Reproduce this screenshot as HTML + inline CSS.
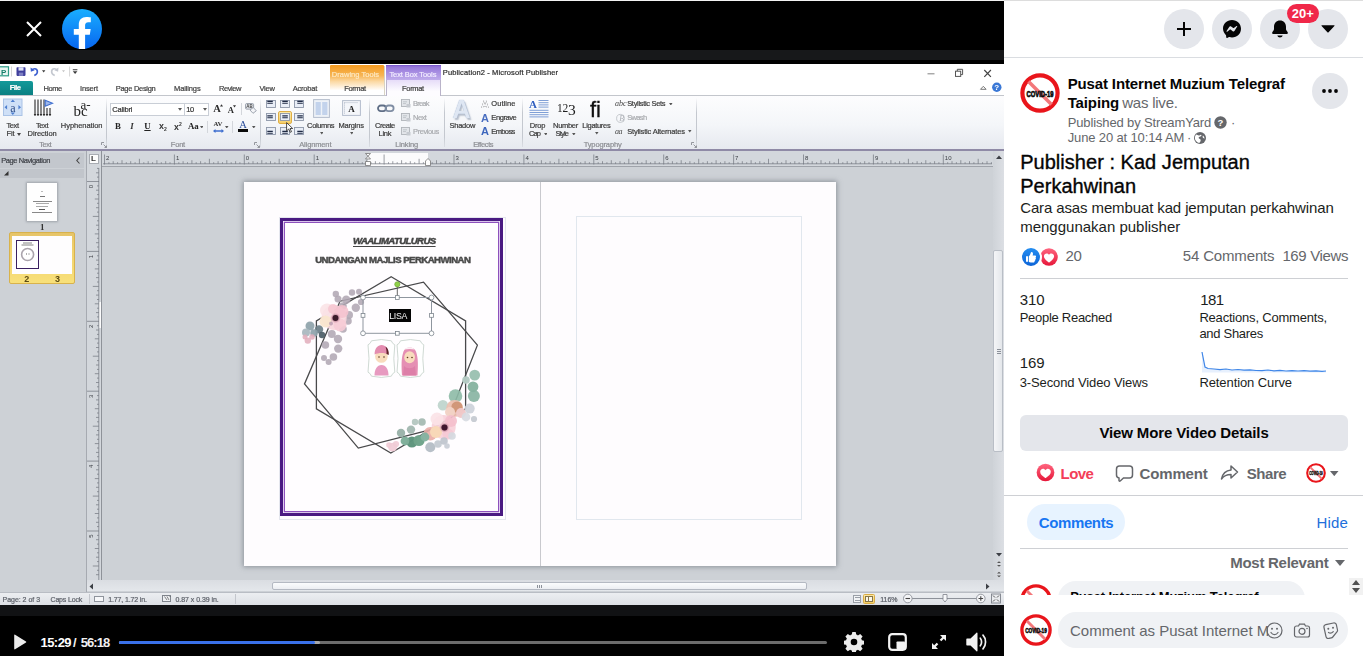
<!DOCTYPE html>
<html lang="en">
<head>
<meta charset="utf-8">
<title>Publisher : Kad Jemputan Perkahwinan</title>
<style>
*{box-sizing:border-box;margin:0;padding:0}
html,body{width:1363px;height:656px;overflow:hidden;background:#fff;font-family:"Liberation Sans",sans-serif;color:#050505}
.abs,.abs *{position:absolute}
#left{position:absolute;left:0;top:0;width:1004px;height:656px;background:#000;overflow:hidden}
#right{position:absolute;left:1004px;top:0;width:359px;height:656px;background:#fff;overflow:hidden}
.t{position:absolute;white-space:nowrap;line-height:1}
/* ---------- video frame ---------- */
#vid{position:absolute;left:0;top:0;width:1004px;height:605px;background:#cdd1d6;overflow:hidden;clip-path:inset(64px 0 0 0);font-size:8.5px;color:#333}
#vid .t{color:#3a3a3a;filter:blur(.35px)}
/* ---------- right panel ---------- */
.circ{position:absolute;width:40px;height:40px;border-radius:50%;background:#e4e6eb}
.g{color:#65676b}
</style>
</head>
<body>
<div id="left">
  <!-- top bar -->
  <div style="position:absolute;left:0;top:0;width:1004px;height:1px;background:#f2f2f2"></div>
  <div style="position:absolute;left:0;top:50px;width:1004px;height:10px;background:#17181a"></div>
  <svg style="position:absolute;left:26px;top:21px" width="16" height="16" viewBox="0 0 16 16"><path d="M1 1L15 15M15 1L1 15" stroke="#fff" stroke-width="2" fill="none"/></svg>
  <svg style="position:absolute;left:62px;top:9px" width="40" height="40" viewBox="0 0 40 40">
    <defs><linearGradient id="fbg" x1="0" y1="0" x2="0" y2="1"><stop offset="0" stop-color="#19aeff"/><stop offset="1" stop-color="#0866f0"/></linearGradient></defs>
    <circle cx="20" cy="20" r="20" fill="url(#fbg)"/>
    <path d="M27.8 25.8l.9-5.8h-5.600v-3.700c0-1.600.8-3.100 3.200-3.100h2.500V8.300s-2.300-.4-4.500-.4c-4.500 0-7.500 2.800-7.500 7.700V20h-5v5.800h5V40h6.300V25.800z" fill="#fff"/>
  </svg>

  <div id="vid">
  <!--VID--><div style="position:absolute;left:0.0px;top:64.0px;width:1004.0px;height:31.0px;background:#fff;"></div>
<div style="position:absolute;left:0.0px;top:95.0px;width:1004.0px;height:54.0px;background:linear-gradient(#fdfdfe 0%,#f4f6f9 55%,#e6e9ef 100%);"></div>
<div style="position:absolute;left:0.0px;top:149.0px;width:1004.0px;height:1.5px;background:#8f8aa6;"></div>
<div style="position:absolute;left:329.5px;top:65.0px;width:54.5px;height:30.0px;background:linear-gradient(#f39a1f 0%,#f7b555 35%,#fbd9a4 55%,#fff 85%);border-radius:1px"></div>
<div style="position:absolute;left:386.0px;top:65.0px;width:54.5px;height:15.0px;background:linear-gradient(#7450c8 0,#9677da 12%,#a88fe2 50%,#bfaceb 100%);"></div>
<div style="position:absolute;left:386.0px;top:80.0px;width:54.5px;height:16.0px;background:linear-gradient(#e6dcf8,#fdfcff 70%);border-left:1px solid #b9b3c9;border-right:1px solid #b9b3c9"></div>
<div style="position:absolute;left:0.0px;top:95.0px;width:386.0px;height:1.0px;background:#c3c6cc;"></div>
<div style="position:absolute;left:440.5px;top:95.0px;width:563.5px;height:1.0px;background:#c3c6cc;"></div>
<div style="position:absolute;left:384.0px;top:66.0px;width:1.0px;height:29.0px;background:#d8d2c4;"></div>
<div class="t" style="left:331.8px;top:71.0px;font-size:7.50px;color:#fde9c4;letter-spacing:0.03px;-webkit-text-stroke:.2px #fde9c4;">Drawing Tools</div>
<div class="t" style="left:389.4px;top:70.8px;font-size:7.50px;color:#f2ecff;letter-spacing:-0.09px;-webkit-text-stroke:.2px #f2ecff;">Text Box Tools</div>
<div class="t" style="left:442.8px;top:69.3px;font-size:7.50px;color:#2c2c2c;letter-spacing:0.12px;-webkit-text-stroke:.2px #2c2c2c;">Publication2 - Microsoft Publisher</div>
<div style="position:absolute;left:0.0px;top:80.5px;width:33.2px;height:14.8px;background:linear-gradient(#139a9a,#0a7f82);border-radius:0 2px 0 0"></div>
<div class="t" style="left:9.8px;top:84.4px;font-size:7.50px;color:#fff;letter-spacing:-0.64px;-webkit-text-stroke:.2px #fff;font-weight:bold;">File</div>
<div class="t" style="left:43.4px;top:84.6px;font-size:7.50px;color:#3d3d3d;letter-spacing:-0.40px;-webkit-text-stroke:.2px #3d3d3d;">Home</div>
<div class="t" style="left:80.0px;top:84.6px;font-size:7.50px;color:#3d3d3d;letter-spacing:-0.15px;-webkit-text-stroke:.2px #3d3d3d;">Insert</div>
<div class="t" style="left:115.8px;top:84.6px;font-size:7.50px;color:#3d3d3d;letter-spacing:-0.30px;-webkit-text-stroke:.2px #3d3d3d;">Page Design</div>
<div class="t" style="left:174.0px;top:84.6px;font-size:7.50px;color:#3d3d3d;letter-spacing:-0.12px;-webkit-text-stroke:.2px #3d3d3d;">Mailings</div>
<div class="t" style="left:219.1px;top:84.6px;font-size:7.50px;color:#3d3d3d;letter-spacing:-0.44px;-webkit-text-stroke:.2px #3d3d3d;">Review</div>
<div class="t" style="left:259.4px;top:84.6px;font-size:7.50px;color:#3d3d3d;letter-spacing:-0.21px;-webkit-text-stroke:.2px #3d3d3d;">View</div>
<div class="t" style="left:292.7px;top:84.6px;font-size:7.50px;color:#3d3d3d;letter-spacing:-0.19px;-webkit-text-stroke:.2px #3d3d3d;">Acrobat</div>
<div class="t" style="left:344.2px;top:84.6px;font-size:7.50px;color:#3d3d3d;letter-spacing:-0.37px;-webkit-text-stroke:.2px #3d3d3d;">Format</div>
<div class="t" style="left:402.1px;top:84.6px;font-size:7.50px;color:#3d3d3d;letter-spacing:-0.35px;-webkit-text-stroke:.2px #3d3d3d;">Format</div>
<svg style="position:absolute;left:0;top:65px;filter:blur(.4px)" width="82" height="13" viewBox="0 65 82 13">
<rect x="-3" y="66.800" width="11.500" height="9" fill="#e9f5f1" stroke="#2c9b86" stroke-width="1.200"/><text x="1" y="74.600" font-family="Liberation Sans, sans-serif" font-weight="bold" font-size="8" fill="#16806c">P</text>
<path d="M11.500 66.500v10" stroke="#c9c9c9" stroke-width=".8"/>
<rect x="16.500" y="67.300" width="9" height="8.600" rx=".8" fill="#3f3f9c"/><rect x="18.500" y="67.300" width="5" height="3.300" fill="#dfe3f5"/><rect x="18.800" y="72.600" width="4.400" height="3.300" fill="#7d7fc2"/>
<path d="M32 70.500c1-2.300 4.800-2.500 5.300.4.300 2-1 3.800-3 4.600" fill="none" stroke="#3c5fd0" stroke-width="1.700"/><path d="M30.500 67.500l.4 4.200 3.800-1.400z" fill="#3c5fd0"/>
<path d="M42 70.300h3.400l-1.700 2.100z" fill="#3b3b3b"/>
<path d="M57 70.500c-1-2.300-4.800-2.500-5.300.4-.3 2 1 3.800 3 4.600" fill="none" stroke="#c3c7cf" stroke-width="1.700"/><path d="M58.500 67.500l-.4 4.200-3.800-1.400z" fill="#c3c7cf"/>
<path d="M62 70.300h3l-1.500 2z" fill="#c4c4c4"/>
<path d="M69.600 66.500v10" stroke="#c9c9c9" stroke-width=".8"/>
<path d="M72.800 69.200h4.600v1h-4.600zM72.800 71.300h4.600l-2.300 2.700z" fill="#3b3b3b"/>
</svg>
<svg style="position:absolute;left:920px;top:65px;filter:blur(.35px)" width="84" height="30" viewBox="920 65 84 30">
<path d="M927.500 73.800h7" stroke="#8d8d8d" stroke-width="1.100"/>
<rect x="955.500" y="71.200" width="5.200" height="5.200" fill="none" stroke="#555" stroke-width="1"/><path d="M957.300 71v-1.700h5.300v5.300h-1.700" fill="none" stroke="#555" stroke-width="1"/>
<path d="M984.300 70l6.600 6.800M990.900 70l-6.600 6.800" stroke="#444" stroke-width="1.200"/>
<path d="M980.500 89.300l2.800-3 2.800 3z" fill="none" stroke="#777" stroke-width="1"/>
<circle cx="996.800" cy="87.200" r="4.700" fill="#3a78d6"/><text x="996.800" y="90.200" text-anchor="middle" font-family="Liberation Sans, sans-serif" font-weight="bold" font-size="8" fill="#fff">?</text>
</svg>
<div style="position:absolute;left:106.3px;top:98.0px;width:1.0px;height:49.0px;background:linear-gradient(rgba(190,194,202,0),#c4c8cf 30%,#c4c8cf 80%,rgba(190,194,202,.3));"></div>
<div style="position:absolute;left:260.0px;top:98.0px;width:1.0px;height:49.0px;background:linear-gradient(rgba(190,194,202,0),#c4c8cf 30%,#c4c8cf 80%,rgba(190,194,202,.3));"></div>
<div style="position:absolute;left:369.4px;top:98.0px;width:1.0px;height:49.0px;background:linear-gradient(rgba(190,194,202,0),#c4c8cf 30%,#c4c8cf 80%,rgba(190,194,202,.3));"></div>
<div style="position:absolute;left:444.2px;top:98.0px;width:1.0px;height:49.0px;background:linear-gradient(rgba(190,194,202,0),#c4c8cf 30%,#c4c8cf 80%,rgba(190,194,202,.3));"></div>
<div style="position:absolute;left:522.0px;top:98.0px;width:1.0px;height:49.0px;background:linear-gradient(rgba(190,194,202,0),#c4c8cf 30%,#c4c8cf 80%,rgba(190,194,202,.3));"></div>
<div style="position:absolute;left:696.3px;top:98.0px;width:1.0px;height:49.0px;background:linear-gradient(rgba(190,194,202,0),#c4c8cf 30%,#c4c8cf 80%,rgba(190,194,202,.3));"></div>
<div class="t" style="left:39.3px;top:140.7px;font-size:7.50px;color:#8b8d92;letter-spacing:-0.52px;-webkit-text-stroke:.2px #8b8d92;">Text</div>
<div class="t" style="left:170.8px;top:140.7px;font-size:7.50px;color:#8b8d92;letter-spacing:-0.20px;-webkit-text-stroke:.2px #8b8d92;">Font</div>
<div class="t" style="left:299.2px;top:140.7px;font-size:7.50px;color:#8b8d92;letter-spacing:-0.13px;-webkit-text-stroke:.2px #8b8d92;">Alignment</div>
<div class="t" style="left:395.2px;top:140.7px;font-size:7.50px;color:#8b8d92;letter-spacing:-0.11px;-webkit-text-stroke:.2px #8b8d92;">Linking</div>
<div class="t" style="left:473.2px;top:140.7px;font-size:7.50px;color:#8b8d92;letter-spacing:-0.40px;-webkit-text-stroke:.2px #8b8d92;">Effects</div>
<div class="t" style="left:583.7px;top:140.7px;font-size:7.50px;color:#8b8d92;letter-spacing:-0.13px;-webkit-text-stroke:.2px #8b8d92;">Typography</div>
<svg style="position:absolute;left:100.8px;top:142px" width="6" height="6" viewBox="0 0 6 6"><path d="M.5 3V.5H3M2.500 2.500l3 3M5.500 3.500v2h-2" fill="none" stroke="#8a8d93" stroke-width=".9"/></svg>
<svg style="position:absolute;left:253.5px;top:142px" width="6" height="6" viewBox="0 0 6 6"><path d="M.5 3V.5H3M2.500 2.500l3 3M5.500 3.500v2h-2" fill="none" stroke="#8a8d93" stroke-width=".9"/></svg>
<svg style="position:absolute;left:690.8px;top:142px" width="6" height="6" viewBox="0 0 6 6"><path d="M.5 3V.5H3M2.500 2.500l3 3M5.500 3.500v2h-2" fill="none" stroke="#8a8d93" stroke-width=".9"/></svg>
<svg style="position:absolute;left:3px;top:98px;filter:blur(.4px)" width="20" height="19" viewBox="0 0 20 19">
<rect x=".5" y="1" width="18.500" height="16.500" fill="#cfe0f7" stroke="#aac3e6" stroke-width="1"/>
<text x="9.800" y="13.500" text-anchor="middle" font-family="Liberation Serif, serif" font-size="12" fill="#2b4a86">a</text>
<path d="M9.800 1.500l2.200 2.600h-4.400zM9.800 17l2.200-2.600h-4.400zM1.500 9.300l2.600-2.200v4.400zM18 9.300l-2.600-2.200v4.400z" fill="#4f7fcf"/></svg>
<div class="t" style="left:6.5px;top:121.6px;font-size:7.50px;color:#3a3a3a;letter-spacing:-0.42px;-webkit-text-stroke:.2px #3a3a3a;">Text</div>
<div class="t" style="left:6.5px;top:129.8px;font-size:7.50px;color:#3a3a3a;letter-spacing:-0.17px;-webkit-text-stroke:.2px #3a3a3a;">Fit</div>
<svg style="position:absolute;left:16.500px;top:132.500px" width="4" height="3" viewBox="0 0 4 3"><path d="M0 0h4L2 3z" fill="#444"/></svg>
<svg style="position:absolute;left:33px;top:98px;filter:blur(.35px)" width="21" height="20" viewBox="0 0 21 20">
<path d="M2 1.500v16M5 1.500v16M8 1.500v16M11 1.500v16M14 10v7.500M17 10v7.500" stroke="#2a2a2a" stroke-width="1.100"/>
<path d="M.7 16l1.300 2 1.300-2zM3.700 16l1.300 2 1.300-2zM6.700 16l1.300 2 1.300-2zM9.700 16l1.300 2 1.300-2zM12.700 16l1.300 2 1.300-2zM15.700 16l1.300 2 1.300-2z" fill="#2a2a2a"/>
<path d="M12.200 2.200l7.300 3-7.300 3z" fill="#9db7ea" stroke="#3f6fd0" stroke-width="1.100"/></svg>
<div class="t" style="left:36.0px;top:121.6px;font-size:7.50px;color:#3a3a3a;letter-spacing:-0.42px;-webkit-text-stroke:.2px #3a3a3a;">Text</div>
<div class="t" style="left:27.5px;top:129.8px;font-size:7.50px;color:#3a3a3a;letter-spacing:-0.04px;-webkit-text-stroke:.2px #3a3a3a;">Direction</div>
<div class="t" style="left:73.500px;top:103.500px;font-family:'Liberation Serif',serif;font-size:15px;color:#222">bc</div>
<div class="t" style="left:80.500px;top:97.500px;font-family:'Liberation Serif',serif;font-size:13px;color:#222">a-</div>
<div class="t" style="left:60.8px;top:121.6px;font-size:7.50px;color:#3a3a3a;letter-spacing:-0.04px;-webkit-text-stroke:.2px #3a3a3a;">Hyphenation</div>
<div style="position:absolute;left:110.3px;top:102.5px;width:99.2px;height:13.5px;background:#fff;border:1px solid #c9ced6"></div>
<div style="position:absolute;left:184.3px;top:103.0px;width:0.8px;height:12.5px;background:#c9ced6;"></div>
<div class="t" style="left:112.3px;top:105.6px;font-size:7.50px;color:#333;letter-spacing:-0.18px;-webkit-text-stroke:.2px #333;">Calibri</div>
<div class="t" style="left:186.3px;top:105.6px;font-size:7.50px;color:#333;letter-spacing:-0.44px;-webkit-text-stroke:.2px #333;">10</div>
<svg style="position:absolute;left:177.8px;top:108px" width="4" height="3" viewBox="0 0 4 3"><path d="M0 0h4L2 2.800z" fill="#555"/></svg>
<svg style="position:absolute;left:203.0px;top:108px" width="4" height="3" viewBox="0 0 4 3"><path d="M0 0h4L2 2.800z" fill="#555"/></svg>
<div class="t" style="left:213.300px;top:104px;font-family:'Liberation Serif',serif;font-weight:bold;font-size:10.500px;color:#2b2b2b">A</div>
<div class="t" style="left:227.800px;top:106px;font-family:'Liberation Serif',serif;font-weight:bold;font-size:8.500px;color:#2b2b2b">A</div>
<svg style="position:absolute;left:219.500px;top:104px" width="3" height="2.500" viewBox="0 0 4 3"><path d="M0 3h4L2 0z" fill="#333"/></svg>
<svg style="position:absolute;left:232.500px;top:105px" width="3" height="2.500" viewBox="0 0 4 3"><path d="M0 0h4L2 3z" fill="#333"/></svg>
<div style="position:absolute;left:241.3px;top:103.0px;width:0.8px;height:12.0px;background:#d3d6db;"></div>
<svg style="position:absolute;left:245px;top:103px;filter:blur(.4px)" width="12" height="11" viewBox="0 0 12 11"><rect x=".6" y=".6" width="8" height="5.500" rx="1" fill="#eef1f6" stroke="#7f8794" stroke-width=".8"/><text x="4.600" y="5" text-anchor="middle" font-family="Liberation Sans, sans-serif" font-weight="bold" font-size="4.500" fill="#444">AB</text><path d="M5 7l3.300-2.500 3 3.300L8 10.300z" fill="#f3f4f7" stroke="#8a92a0" stroke-width=".8"/></svg>
<div class="t" style="left:115px;top:122.300px;font-family:'Liberation Serif',serif;font-weight:bold;font-size:8.800px;color:#222">B</div>
<div class="t" style="left:130.300px;top:122.300px;font-family:'Liberation Serif',serif;font-weight:bold;font-style:italic;font-size:8.800px;color:#333">I</div>
<div class="t" style="left:144.300px;top:122.300px;font-family:'Liberation Serif',serif;font-weight:bold;font-size:8.800px;color:#222;text-decoration:underline">U</div>
<div class="t" style="left:159px;top:122px;font-weight:bold;font-size:8.800px;color:#333">x<span style="font-size:5px;vertical-align:-1.500px">2</span></div>
<div class="t" style="left:174px;top:122px;font-weight:bold;font-size:8.800px;color:#333">x<span style="font-size:5px;vertical-align:4px">2</span></div>
<div class="t" style="left:188px;top:122.300px;font-family:'Liberation Serif',serif;font-weight:bold;font-size:8.800px;color:#222">Aa</div>
<svg style="position:absolute;left:199.500px;top:125.500px" width="3.500" height="2.600" viewBox="0 0 4 3"><path d="M0 0h4L2 3z" fill="#555"/></svg>
<div style="position:absolute;left:207.0px;top:121.0px;width:0.8px;height:12.0px;background:#d3d6db;"></div>
<div class="t" style="left:213.500px;top:121.300px;font-family:'Liberation Serif',serif;font-weight:bold;font-size:6.800px;color:#333">AV</div>
<svg style="position:absolute;left:212.500px;top:128.500px" width="11" height="4" viewBox="0 0 11 4"><path d="M0 2l2.500-2v1.300h6V0L11 2 8.500 4V2.700h-6V4z" fill="#3f6fd0"/></svg>
<svg style="position:absolute;left:225px;top:125.500px" width="3.500" height="2.600" viewBox="0 0 4 3"><path d="M0 0h4L2 3z" fill="#555"/></svg>
<div style="position:absolute;left:232.4px;top:121.0px;width:0.8px;height:12.0px;background:#d3d6db;"></div>
<div class="t" style="left:239.300px;top:120.300px;font-family:'Liberation Serif',serif;font-size:10.500px;color:#2c4f9c">A</div>
<div style="position:absolute;left:237.9px;top:129.3px;width:10.4px;height:2.6px;background:#0b0b0b;"></div>
<svg style="position:absolute;left:252px;top:125.500px" width="3.500" height="2.600" viewBox="0 0 4 3"><path d="M0 0h4L2 3z" fill="#555"/></svg>
<div style="position:absolute;left:278.0px;top:110.7px;width:14.0px;height:13.3px;background:linear-gradient(#fbe9a8,#f5cf6a);border:1px solid #dfae45;border-radius:2px"></div>
<svg style="position:absolute;left:266.2px;top:99.7px;filter:blur(.35px)" width="10" height="8" viewBox="0 0 10 8"><rect x=".5" y=".5" width="9" height="7" fill="#e9eef7" stroke="#8d97a8" stroke-width=".9"/><path d="M1.3 1.4h5.500M1.3 3.3h5.500" stroke="#1f2a44" stroke-width="1.100"/></svg>
<svg style="position:absolute;left:280.2px;top:99.7px;filter:blur(.35px)" width="10" height="8" viewBox="0 0 10 8"><rect x=".5" y=".5" width="9" height="7" fill="#e9eef7" stroke="#8d97a8" stroke-width=".9"/><path d="M2.3 1.4h5.500M2.3 3.3h5.500" stroke="#1f2a44" stroke-width="1.100"/></svg>
<svg style="position:absolute;left:294.2px;top:99.7px;filter:blur(.35px)" width="10" height="8" viewBox="0 0 10 8"><rect x=".5" y=".5" width="9" height="7" fill="#e9eef7" stroke="#8d97a8" stroke-width=".9"/><path d="M3.3 1.4h5.500M3.3 3.3h5.500" stroke="#1f2a44" stroke-width="1.100"/></svg>
<svg style="position:absolute;left:266.2px;top:113.4px;filter:blur(.35px)" width="10" height="8" viewBox="0 0 10 8"><rect x=".5" y=".5" width="9" height="7" fill="#e9eef7" stroke="#8d97a8" stroke-width=".9"/><path d="M1.3 2.9h5.500M1.3 4.8h5.500" stroke="#1f2a44" stroke-width="1.100"/></svg>
<svg style="position:absolute;left:280.2px;top:113.4px;filter:blur(.35px)" width="10" height="8" viewBox="0 0 10 8"><rect x=".5" y=".5" width="9" height="7" fill="#e9eef7" stroke="#8d97a8" stroke-width=".9"/><path d="M2.3 2.9h5.500M2.3 4.8h5.500" stroke="#1f2a44" stroke-width="1.100"/></svg>
<svg style="position:absolute;left:294.2px;top:113.4px;filter:blur(.35px)" width="10" height="8" viewBox="0 0 10 8"><rect x=".5" y=".5" width="9" height="7" fill="#e9eef7" stroke="#8d97a8" stroke-width=".9"/><path d="M3.3 2.9h5.500M3.3 4.8h5.500" stroke="#1f2a44" stroke-width="1.100"/></svg>
<svg style="position:absolute;left:266.2px;top:127.2px;filter:blur(.35px)" width="10" height="8" viewBox="0 0 10 8"><rect x=".5" y=".5" width="9" height="7" fill="#e9eef7" stroke="#8d97a8" stroke-width=".9"/><path d="M1.3 4.4h5.500M1.3 6.3h5.500" stroke="#1f2a44" stroke-width="1.100"/></svg>
<svg style="position:absolute;left:280.2px;top:127.2px;filter:blur(.35px)" width="10" height="8" viewBox="0 0 10 8"><rect x=".5" y=".5" width="9" height="7" fill="#e9eef7" stroke="#8d97a8" stroke-width=".9"/><path d="M2.3 4.4h5.500M2.3 6.3h5.500" stroke="#1f2a44" stroke-width="1.100"/></svg>
<svg style="position:absolute;left:294.2px;top:127.2px;filter:blur(.35px)" width="10" height="8" viewBox="0 0 10 8"><rect x=".5" y=".5" width="9" height="7" fill="#e9eef7" stroke="#8d97a8" stroke-width=".9"/><path d="M3.3 4.4h5.500M3.3 6.3h5.500" stroke="#1f2a44" stroke-width="1.100"/></svg>
<svg style="position:absolute;left:285.500px;top:122px" width="8" height="11" viewBox="0 0 8 11"><path d="M.6.600v8.300l2.100-1.900 1.500 3.300 1.300-.6-1.500-3.200h2.700z" fill="#fff" stroke="#222" stroke-width=".8"/></svg>
<svg style="position:absolute;left:313px;top:99px;filter:blur(.4px)" width="17" height="19" viewBox="0 0 17 19"><rect x=".6" y=".6" width="15.800" height="17.800" fill="#eef2f8" stroke="#b4bdcc" stroke-width="1"/><rect x="2.600" y="3" width="5.200" height="13" fill="#c3d3ec"/><rect x="9.200" y="3" width="5.200" height="13" fill="#c3d3ec"/></svg>
<div class="t" style="left:307.1px;top:121.6px;font-size:7.50px;color:#3a3a3a;letter-spacing:-0.37px;-webkit-text-stroke:.2px #3a3a3a;">Columns</div>
<div class="t" style="left:338.4px;top:121.6px;font-size:7.50px;color:#3a3a3a;letter-spacing:-0.16px;-webkit-text-stroke:.2px #3a3a3a;">Margins</div>
<svg style="position:absolute;left:319.5px;top:132px" width="3.600" height="2.600" viewBox="0 0 4 3"><path d="M0 0h4L2 3z" fill="#555"/></svg>
<svg style="position:absolute;left:349.7px;top:132px" width="3.600" height="2.600" viewBox="0 0 4 3"><path d="M0 0h4L2 3z" fill="#555"/></svg>
<svg style="position:absolute;left:342px;top:100px;filter:blur(.4px)" width="19" height="16" viewBox="0 0 19 16"><rect x=".6" y=".6" width="17.800" height="14.800" fill="#f4f6fa" stroke="#b4bdcc" stroke-width="1"/><path d="M2.500 2.600h14M2.500 2.600v11" stroke="#98a2b4" stroke-width=".7" stroke-dasharray="1 1"/><text x="9.500" y="12" text-anchor="middle" font-family="Liberation Serif, serif" font-weight="bold" font-size="9" fill="#222">A</text></svg>
<svg style="position:absolute;left:376.500px;top:104px;filter:blur(.45px)" width="18" height="9" viewBox="0 0 18 9"><rect x="1" y="1.500" width="8" height="5.600" rx="2.800" fill="none" stroke="#5f6e86" stroke-width="1.800"/><rect x="8.600" y="1.500" width="8" height="5.600" rx="2.800" fill="none" stroke="#7f8da3" stroke-width="1.800"/></svg>
<div class="t" style="left:375.0px;top:121.6px;font-size:7.50px;color:#3a3a3a;letter-spacing:-0.46px;-webkit-text-stroke:.2px #3a3a3a;">Create</div>
<div class="t" style="left:378.5px;top:129.8px;font-size:7.50px;color:#3a3a3a;letter-spacing:-0.25px;-webkit-text-stroke:.2px #3a3a3a;">Link</div>
<svg style="position:absolute;left:401px;top:99.1px;filter:blur(.45px)" width="10" height="9" viewBox="0 0 10 9"><rect x=".5" y=".5" width="8" height="7" fill="#e3e6ea" stroke="#b0b4ba" stroke-width=".9"/><path d="M2 2.800h4M2 4.600h3" stroke="#b8bcc2" stroke-width=".8"/><rect x="5.500" y="5" width="4" height="3.500" fill="#c6cad0"/></svg>
<div class="t" style="left:413.1px;top:100.0px;font-size:7.50px;color:#a9abaf;letter-spacing:-0.80px;-webkit-text-stroke:.2px #a9abaf;">Break</div>
<svg style="position:absolute;left:401px;top:113.1px;filter:blur(.45px)" width="10" height="9" viewBox="0 0 10 9"><rect x=".5" y=".5" width="8" height="7" fill="#e3e6ea" stroke="#b0b4ba" stroke-width=".9"/><path d="M2 2.800h4M2 4.600h3" stroke="#b8bcc2" stroke-width=".8"/><rect x="5.500" y="5" width="4" height="3.500" fill="#c6cad0"/></svg>
<div class="t" style="left:413.1px;top:114.0px;font-size:7.50px;color:#a9abaf;letter-spacing:-0.57px;-webkit-text-stroke:.2px #a9abaf;">Next</div>
<svg style="position:absolute;left:401px;top:126.9px;filter:blur(.45px)" width="10" height="9" viewBox="0 0 10 9"><rect x=".5" y=".5" width="8" height="7" fill="#e3e6ea" stroke="#b0b4ba" stroke-width=".9"/><path d="M2 2.800h4M2 4.600h3" stroke="#b8bcc2" stroke-width=".8"/><rect x="5.500" y="5" width="4" height="3.500" fill="#c6cad0"/></svg>
<div class="t" style="left:413.1px;top:127.8px;font-size:7.50px;color:#a9abaf;letter-spacing:-0.44px;-webkit-text-stroke:.2px #a9abaf;">Previous</div>
<div class="t" style="left:452.500px;top:96.500px;font-size:25px;font-weight:bold;color:#dfe7f3;text-shadow:0 0 1px #8ea3c4,1.500px 1.500px 1.500px #b7bfcc;filter:blur(.4px)">A</div>
<div class="t" style="left:449.5px;top:121.6px;font-size:7.50px;color:#3a3a3a;letter-spacing:-0.26px;-webkit-text-stroke:.2px #3a3a3a;">Shadow</div>
<div class="t" style="left:481px;top:98.500px;font-size:11px;font-weight:bold;color:#f7f8fa;text-shadow:0 0 .6px #555,0 0 .6px #555">A</div>
<div class="t" style="left:481px;top:112.500px;font-size:11px;font-weight:bold;color:#4a6fc0">A</div>
<div class="t" style="left:481px;top:126.300px;font-size:11px;font-weight:bold;color:#3d66bd">A</div>
<div class="t" style="left:491.3px;top:100.0px;font-size:7.50px;color:#3a3a3a;letter-spacing:0.04px;-webkit-text-stroke:.2px #3a3a3a;">Outline</div>
<div class="t" style="left:491.3px;top:114.0px;font-size:7.50px;color:#3a3a3a;letter-spacing:-0.42px;-webkit-text-stroke:.2px #3a3a3a;">Engrave</div>
<div class="t" style="left:491.3px;top:127.8px;font-size:7.50px;color:#3a3a3a;letter-spacing:-0.62px;-webkit-text-stroke:.2px #3a3a3a;">Emboss</div>
<svg style="position:absolute;left:528.500px;top:98.500px;filter:blur(.4px)" width="20" height="20" viewBox="0 0 20 20"><text x="0" y="8.600" font-family="Liberation Serif, serif" font-weight="bold" font-size="11" fill="#2f5fc0">A</text><path d="M9.500 1.500h10M9.500 3.700h10M9.500 5.900h10M9.500 8.100h10M.5 11.300h19M.5 13.500h19M.5 15.700h19M.5 17.900h19" stroke="#7f9fd6" stroke-width="1"/></svg>
<div class="t" style="left:529.7px;top:121.6px;font-size:7.50px;color:#3a3a3a;letter-spacing:-0.15px;-webkit-text-stroke:.2px #3a3a3a;">Drop</div>
<div class="t" style="left:529.1px;top:129.8px;font-size:7.50px;color:#3a3a3a;letter-spacing:-0.93px;-webkit-text-stroke:.2px #3a3a3a;">Cap</div>
<svg style="position:absolute;left:543.500px;top:132.500px" width="3.600" height="2.600" viewBox="0 0 4 3"><path d="M0 0h4L2 3z" fill="#555"/></svg>
<div class="t" style="left:557px;top:101.500px;font-family:'Liberation Serif',serif;font-size:11.500px;color:#1d1d1d;letter-spacing:-.3px">12<span style="font-size:15.500px;vertical-align:-3px">3</span></div>
<div class="t" style="left:553.1px;top:121.6px;font-size:7.50px;color:#3a3a3a;letter-spacing:-0.32px;-webkit-text-stroke:.2px #3a3a3a;">Number</div>
<div class="t" style="left:555.5px;top:129.8px;font-size:7.50px;color:#3a3a3a;letter-spacing:-0.79px;-webkit-text-stroke:.2px #3a3a3a;">Style</div>
<svg style="position:absolute;left:572px;top:132.500px" width="3.600" height="2.600" viewBox="0 0 4 3"><path d="M0 0h4L2 3z" fill="#555"/></svg>
<div class="t" style="left:590px;top:98.500px;font-size:22px;color:#111;-webkit-text-stroke:.3px #111">fi</div>
<div class="t" style="left:582.3px;top:121.6px;font-size:7.50px;color:#3a3a3a;letter-spacing:-0.31px;-webkit-text-stroke:.2px #3a3a3a;">Ligatures</div>
<svg style="position:absolute;left:595px;top:132px" width="3.600" height="2.600" viewBox="0 0 4 3"><path d="M0 0h4L2 3z" fill="#555"/></svg>
<div class="t" style="left:615px;top:100px;font-family:'Liberation Serif',serif;font-style:italic;font-size:8px;color:#444">abc</div>
<div class="t" style="left:627.2px;top:100.0px;font-size:7.50px;color:#3a3a3a;letter-spacing:-0.32px;-webkit-text-stroke:.2px #3a3a3a;">Stylistic Sets</div>
<svg style="position:absolute;left:669px;top:102.500px" width="3.600" height="2.600" viewBox="0 0 4 3"><path d="M0 0h4L2 3z" fill="#555"/></svg>
<svg style="position:absolute;left:615.500px;top:112.500px;filter:blur(.4px)" width="10" height="10" viewBox="0 0 10 10"><circle cx="4.600" cy="5.400" r="4" fill="none" stroke="#b9bcc2" stroke-width=".8"/><text x="5.600" y="7.800" text-anchor="middle" font-family="Liberation Serif, serif" font-style="italic" font-size="8" fill="#aeb1b7">B</text></svg>
<div class="t" style="left:627.2px;top:114.0px;font-size:7.50px;color:#a9abaf;letter-spacing:-0.65px;-webkit-text-stroke:.2px #a9abaf;">Swash</div>
<div class="t" style="left:615px;top:127.500px;font-family:'Liberation Serif',serif;font-style:italic;font-size:8px;color:#444;letter-spacing:-.5px">aa</div>
<div class="t" style="left:627.2px;top:127.8px;font-size:7.50px;color:#3a3a3a;letter-spacing:-0.16px;-webkit-text-stroke:.2px #3a3a3a;">Stylistic Alternates</div>
<svg style="position:absolute;left:688.300px;top:130.300px" width="3.600" height="2.600" viewBox="0 0 4 3"><path d="M0 0h4L2 3z" fill="#555"/></svg>
<div style="position:absolute;left:0.0px;top:150.5px;width:85.7px;height:441.0px;background:#cdd1d6;"></div>
<div style="position:absolute;left:0.0px;top:152.5px;width:84.0px;height:15.1px;background:#c3c7cd;"></div>
<div style="position:absolute;left:0.0px;top:169.0px;width:84.0px;height:9.0px;background:#c1c5cb;"></div>
<div class="t" style="left:1.3px;top:156.6px;font-size:7.50px;color:#3c3f45;letter-spacing:-0.43px;-webkit-text-stroke:.2px #3c3f45;">Page Navigation</div>
<svg style="position:absolute;left:75.500px;top:156.500px" width="4" height="7" viewBox="0 0 4 7"><path d="M3.500.500L.8 3.500l2.700 3" fill="none" stroke="#444" stroke-width="1.100"/></svg>
<svg style="position:absolute;left:4px;top:171px" width="4.500" height="4.500" viewBox="0 0 5 5"><path d="M0 5h5V0z" fill="#333"/></svg>
<div style="position:absolute;left:26.8px;top:182.7px;width:30.5px;height:38.5px;background:#fefefe;box-shadow:0 0 2px 1px rgba(120,125,135,.55)"></div>
<div style="position:absolute;left:41.0px;top:191.0px;width:2.0px;height:0.9px;background:#bbb;filter:blur(.3px)"></div>
<div style="position:absolute;left:39.5px;top:195.5px;width:5.0px;height:0.9px;background:#777;filter:blur(.3px)"></div>
<div style="position:absolute;left:32.5px;top:200.5px;width:19.0px;height:0.9px;background:#888;filter:blur(.3px)"></div>
<div style="position:absolute;left:35.5px;top:202.5px;width:13.0px;height:0.9px;background:#aaa;filter:blur(.3px)"></div>
<div style="position:absolute;left:36.0px;top:206.0px;width:12.0px;height:0.9px;background:#aaa;filter:blur(.3px)"></div>
<div style="position:absolute;left:39.0px;top:208.5px;width:6.0px;height:0.9px;background:#555;filter:blur(.3px)"></div>
<div style="position:absolute;left:32.0px;top:212.0px;width:20.0px;height:0.9px;background:#888;filter:blur(.3px)"></div>
<div class="t" style="left:40px;top:222.500px;font-family:'Liberation Serif',serif;font-weight:bold;font-size:9px;color:#333">1</div>
<div style="position:absolute;left:8.9px;top:232.1px;width:66.6px;height:51.5px;background:linear-gradient(#e6c469,#f0d06c 30%,#f8e07a 100%);border:1px solid #d8b24c;border-radius:2px"></div>
<div style="position:absolute;left:12.1px;top:235.6px;width:60.3px;height:38.7px;background:#fefdfe;"></div>
<div style="position:absolute;left:16.2px;top:240.1px;width:22.9px;height:29.1px;background:#fff;border:1px solid #3a2060"></div>
<svg style="position:absolute;left:18px;top:241px;filter:blur(.5px)" width="20" height="27" viewBox="0 0 20 27"><path d="M5 2h9M3.500 4h12" stroke="#666" stroke-width=".8"/><circle cx="9.600" cy="13.500" r="6" fill="none" stroke="#aaa4ac" stroke-width="1.600"/><path d="M8.500 12v2M11 12v2" stroke="#999" stroke-width=".8"/></svg>
<div class="t" style="left:24.300px;top:275px;font-weight:bold;font-size:9px;color:#5a4a12">2</div>
<div class="t" style="left:55px;top:275px;font-weight:bold;font-size:9px;color:#5a4a12">3</div>
<div style="position:absolute;left:85.7px;top:150.5px;width:918.3px;height:15.8px;background:#d3d7dc;"></div>
<div style="position:absolute;left:85.7px;top:166.0px;width:907.7px;height:1.0px;background:#9fa3aa;"></div>
<div style="position:absolute;left:86.2px;top:150.5px;width:15.3px;height:429.9px;background:#d3d7dc;"></div>
<div style="position:absolute;left:85.7px;top:150.5px;width:0.8px;height:441.0px;background:#a6aab1;"></div>
<div style="position:absolute;left:101.2px;top:150.5px;width:1.0px;height:429.9px;background:#8e9299;"></div>
<div style="position:absolute;left:88.5px;top:154.3px;width:10.0px;height:9.3px;background:#fdfdfd;border:1px solid #a9adb3"></div>
<div class="t" style="left:91px;top:155px;font-weight:bold;font-size:8px;color:#333">L</div>
<div style="position:absolute;left:368.0px;top:153.0px;width:59.5px;height:12.5px;background:#fbfbfc;"></div>
<div style="position:absolute;left:99.0px;top:302.0px;width:2.3px;height:26.0px;background:#fbfbfc;"></div>
<svg style="position:absolute;left:0;top:0;filter:blur(.3px)" width="1004" height="604" viewBox="0 0 1004 604"><path d="M104.5 154.5v10 M108.9 162.2v1.6 M113.2 161.2v2.6 M117.6 162.2v1.6 M122.0 160.2v3.6 M126.3 162.2v1.6 M130.7 161.2v2.6 M135.1 162.2v1.6 M139.4 158.8v5.0 M143.8 162.2v1.6 M148.2 161.2v2.6 M152.6 162.2v1.6 M156.9 160.2v3.6 M161.3 162.2v1.6 M165.7 161.2v2.6 M170.0 162.2v1.6 M174.4 154.5v10 M178.8 162.2v1.6 M183.1 161.2v2.6 M187.5 162.2v1.6 M191.9 160.2v3.6 M196.2 162.2v1.6 M200.6 161.2v2.6 M205.0 162.2v1.6 M209.4 158.8v5.0 M213.7 162.2v1.6 M218.1 161.2v2.6 M222.5 162.2v1.6 M226.8 160.2v3.6 M231.2 162.2v1.6 M235.6 161.2v2.6 M239.9 162.2v1.6 M244.3 154.5v10 M248.7 162.2v1.6 M253.0 161.2v2.6 M257.4 162.2v1.6 M261.8 160.2v3.6 M266.1 162.2v1.6 M270.5 161.2v2.6 M274.9 162.2v1.6 M279.2 158.8v5.0 M283.6 162.2v1.6 M288.0 161.2v2.6 M292.4 162.2v1.6 M296.7 160.2v3.6 M301.1 162.2v1.6 M305.5 161.2v2.6 M309.8 162.2v1.6 M314.2 154.5v10 M318.6 162.2v1.6 M322.9 161.2v2.6 M327.3 162.2v1.6 M331.7 160.2v3.6 M336.0 162.2v1.6 M340.4 161.2v2.6 M344.8 162.2v1.6 M349.2 158.8v5.0 M353.5 162.2v1.6 M357.9 161.2v2.6 M362.3 162.2v1.6 M366.6 160.2v3.6 M371.0 162.2v1.6 M375.4 161.2v2.6 M379.7 162.2v1.6 M384.1 154.5v10 M388.5 162.2v1.6 M392.8 161.2v2.6 M397.2 162.2v1.6 M401.6 160.2v3.6 M405.9 162.2v1.6 M410.3 161.2v2.6 M414.7 162.2v1.6 M419.1 158.8v5.0 M423.4 162.2v1.6 M427.8 161.2v2.6 M432.2 162.2v1.6 M436.5 160.2v3.6 M440.9 162.2v1.6 M445.3 161.2v2.6 M449.6 162.2v1.6 M454.0 154.5v10 M458.4 162.2v1.6 M462.7 161.2v2.6 M467.1 162.2v1.6 M471.5 160.2v3.6 M475.8 162.2v1.6 M480.2 161.2v2.6 M484.6 162.2v1.6 M489.0 158.8v5.0 M493.3 162.2v1.6 M497.7 161.2v2.6 M502.1 162.2v1.6 M506.4 160.2v3.6 M510.8 162.2v1.6 M515.2 161.2v2.6 M519.5 162.2v1.6 M523.9 154.5v10 M528.3 162.2v1.6 M532.6 161.2v2.6 M537.0 162.2v1.6 M541.4 160.2v3.6 M545.7 162.2v1.6 M550.1 161.2v2.6 M554.5 162.2v1.6 M558.9 158.8v5.0 M563.2 162.2v1.6 M567.6 161.2v2.6 M572.0 162.2v1.6 M576.3 160.2v3.6 M580.7 162.2v1.6 M585.1 161.2v2.6 M589.4 162.2v1.6 M593.8 154.5v10 M598.2 162.2v1.6 M602.5 161.2v2.6 M606.9 162.2v1.6 M611.3 160.2v3.6 M615.6 162.2v1.6 M620.0 161.2v2.6 M624.4 162.2v1.6 M628.8 158.8v5.0 M633.1 162.2v1.6 M637.5 161.2v2.6 M641.9 162.2v1.6 M646.2 160.2v3.6 M650.6 162.2v1.6 M655.0 161.2v2.6 M659.3 162.2v1.6 M663.7 154.5v10 M668.1 162.2v1.6 M672.4 161.2v2.6 M676.8 162.2v1.6 M681.2 160.2v3.6 M685.5 162.2v1.6 M689.9 161.2v2.6 M694.3 162.2v1.6 M698.7 158.8v5.0 M703.0 162.2v1.6 M707.4 161.2v2.6 M711.8 162.2v1.6 M716.1 160.2v3.6 M720.5 162.2v1.6 M724.9 161.2v2.6 M729.2 162.2v1.6 M733.6 154.5v10 M738.0 162.2v1.6 M742.3 161.2v2.6 M746.7 162.2v1.6 M751.1 160.2v3.6 M755.4 162.2v1.6 M759.8 161.2v2.6 M764.2 162.2v1.6 M768.5 158.8v5.0 M772.9 162.2v1.6 M777.3 161.2v2.6 M781.7 162.2v1.6 M786.0 160.2v3.6 M790.4 162.2v1.6 M794.8 161.2v2.6 M799.1 162.2v1.6 M803.5 154.5v10 M807.9 162.2v1.6 M812.2 161.2v2.6 M816.6 162.2v1.6 M821.0 160.2v3.6 M825.3 162.2v1.6 M829.7 161.2v2.6 M834.1 162.2v1.6 M838.5 158.8v5.0 M842.8 162.2v1.6 M847.2 161.2v2.6 M851.6 162.2v1.6 M855.9 160.2v3.6 M860.3 162.2v1.6 M864.7 161.2v2.6 M869.0 162.2v1.6 M873.4 154.5v10 M877.8 162.2v1.6 M882.1 161.2v2.6 M886.5 162.2v1.6 M890.9 160.2v3.6 M895.2 162.2v1.6 M899.6 161.2v2.6 M904.0 162.2v1.6 M908.4 158.8v5.0 M912.7 162.2v1.6 M917.1 161.2v2.6 M921.5 162.2v1.6 M925.8 160.2v3.6 M930.2 162.2v1.6 M934.6 161.2v2.6 M938.9 162.2v1.6 M943.3 154.5v10 M947.7 162.2v1.6 M952.0 161.2v2.6 M956.4 162.2v1.6 M960.8 160.2v3.6 M965.1 162.2v1.6 M969.5 161.2v2.6 M973.9 162.2v1.6 M978.2 158.8v5.0 M982.6 162.2v1.6 M987.0 161.2v2.6 M991.4 162.2v1.6 M103 163.800H992" stroke="#70747c" stroke-width=".7" fill="none"/>
<path d="M97.0 168.4h1.8 M96.0 172.8h2.8 M97.0 177.1h1.8 M87 181.5h12 M97.0 185.9h1.8 M96.0 190.2h2.8 M97.0 194.6h1.8 M94.8 199.0h4.0 M97.0 203.3h1.8 M96.0 207.7h2.8 M97.0 212.1h1.8 M92.8 216.4h6.0 M97.0 220.8h1.8 M96.0 225.2h2.8 M97.0 229.6h1.8 M94.8 233.9h4.0 M97.0 238.3h1.8 M96.0 242.7h2.8 M97.0 247.0h1.8 M87 251.4h12 M97.0 255.8h1.8 M96.0 260.1h2.8 M97.0 264.5h1.8 M94.8 268.9h4.0 M97.0 273.2h1.8 M96.0 277.6h2.8 M97.0 282.0h1.8 M92.8 286.4h6.0 M97.0 290.7h1.8 M96.0 295.1h2.8 M97.0 299.5h1.8 M94.8 303.8h4.0 M97.0 308.2h1.8 M96.0 312.6h2.8 M97.0 316.9h1.8 M87 321.3h12 M97.0 325.7h1.8 M96.0 330.0h2.8 M97.0 334.4h1.8 M94.8 338.8h4.0 M97.0 343.1h1.8 M96.0 347.5h2.8 M97.0 351.9h1.8 M92.8 356.2h6.0 M97.0 360.6h1.8 M96.0 365.0h2.8 M97.0 369.4h1.8 M94.8 373.7h4.0 M97.0 378.1h1.8 M96.0 382.5h2.8 M97.0 386.8h1.8 M87 391.2h12 M97.0 395.6h1.8 M96.0 399.9h2.8 M97.0 404.3h1.8 M94.8 408.7h4.0 M97.0 413.0h1.8 M96.0 417.4h2.8 M97.0 421.8h1.8 M92.8 426.2h6.0 M97.0 430.5h1.8 M96.0 434.9h2.8 M97.0 439.3h1.8 M94.8 443.6h4.0 M97.0 448.0h1.8 M96.0 452.4h2.8 M97.0 456.7h1.8 M87 461.1h12 M97.0 465.5h1.8 M96.0 469.8h2.8 M97.0 474.2h1.8 M94.8 478.6h4.0 M97.0 482.9h1.8 M96.0 487.3h2.8 M97.0 491.7h1.8 M92.8 496.1h6.0 M97.0 500.4h1.8 M96.0 504.8h2.8 M97.0 509.2h1.8 M94.8 513.5h4.0 M97.0 517.9h1.8 M96.0 522.3h2.8 M97.0 526.6h1.8 M87 531.0h12 M97.0 535.4h1.8 M96.0 539.7h2.8 M97.0 544.1h1.8 M94.8 548.5h4.0 M97.0 552.8h1.8 M96.0 557.2h2.8 M97.0 561.6h1.8 M92.8 566.0h6.0 M97.0 570.3h1.8 M96.0 574.7h2.8 M98.800 168V580" stroke="#70747c" stroke-width=".7" fill="none"/>
<g font-family="Liberation Sans, sans-serif" font-size="6" fill="#3d4046"><text x="106.0" y="159.500">2</text><text x="175.9" y="159.500">1</text><text x="245.8" y="159.500">0</text><text x="315.7" y="159.500">1</text><text x="455.5" y="159.500">3</text><text x="525.4" y="159.500">4</text><text x="595.3" y="159.500">5</text><text x="665.2" y="159.500">6</text><text x="735.1" y="159.500">7</text><text x="805.0" y="159.500">8</text><text x="874.9" y="159.500">9</text><text x="944.8" y="159.500">10</text><text x="0" y="0" transform="translate(92.5,188.3) rotate(-90)">0</text><text x="0" y="0" transform="translate(92.5,258.2) rotate(-90)">1</text><text x="0" y="0" transform="translate(92.5,328.1) rotate(-90)">2</text><text x="0" y="0" transform="translate(92.5,398.0) rotate(-90)">3</text><text x="0" y="0" transform="translate(92.5,467.9) rotate(-90)">4</text><text x="0" y="0" transform="translate(92.5,537.8) rotate(-90)">5</text></g>
<path d="M365.500 153.500h5l-5 5.500h5zM365.500 161.500h5v4h-5zM425.500 161l2.500-2.500 2.500 2.500v4.500h-5z" fill="#fdfdfd" stroke="#666" stroke-width=".7"/></svg>
<div style="position:absolute;left:244.0px;top:181.5px;width:592.0px;height:384.5px;background:#fefcfe;box-shadow:0 0 5px 1px rgba(100,105,115,.6)"></div>
<div style="position:absolute;left:540.0px;top:181.5px;width:1.0px;height:384.5px;background:#c9c9ce;"></div>
<div style="position:absolute;left:575.5px;top:216.0px;width:226.0px;height:303.5px;background:transparent;border:1px solid #e1e7ee"></div>
<div style="position:absolute;left:278.5px;top:216.5px;width:227.0px;height:303.0px;background:#fefdff;border:1px solid #e4e6ee"></div>
<div style="position:absolute;left:280.0px;top:218.0px;width:223.3px;height:298.0px;background:#fffdff;border:3.800px solid #4a1a82;box-shadow:inset 0 0 0 .8px #f4ecfa,inset 0 0 0 2px #8d50bd"></div>
<svg style="position:absolute;left:0;top:0" width="1004" height="604" viewBox="0 0 1004 604"><defs><filter id="fl1"><feGaussianBlur stdDeviation=".6"/></filter><filter id="fl2"><feGaussianBlur stdDeviation=".45"/></filter><radialGradient id="pk"><stop offset="0" stop-color="#4a2438"/><stop offset=".4" stop-color="#8a5068"/><stop offset="1" stop-color="#f0b4c4" stop-opacity="0"/></radialGradient></defs><g filter="url(#fl2)" fill="none" stroke="#4a4a4c" stroke-width="1.300" stroke-linejoin="miter"><polygon points="391.2,276.7 465.6,320.9 465.6,408.9 390.8,453.1 316.4,408.9 316.4,320.9"/><polygon points="423.5,282.2 477.4,345.2 445.6,426 358.3,448.1 304.5,384 340,301.2"/></g><g filter="url(#fl1)"><circle cx="346.2" cy="299.8" r="4.2" fill="#b2a7b4" opacity="0.88"/><circle cx="355.8" cy="307.8" r="4.2" fill="#b2a7b4" opacity="0.88"/><circle cx="352.0" cy="292.5" r="3.2" fill="#b2a7b4" opacity="0.88"/><circle cx="359.0" cy="291.8" r="3.0" fill="#b2a7b4" opacity="0.88"/><circle cx="335.8" cy="294.0" r="3.2" fill="#b2a7b4" opacity="0.88"/><circle cx="338.0" cy="299.0" r="3.5" fill="#b2a7b4" opacity="0.88"/><circle cx="349.0" cy="315.0" r="4.0" fill="#b2a7b4" opacity="0.88"/><circle cx="348.0" cy="321.0" r="3.8" fill="#b2a7b4" opacity="0.88"/><circle cx="331.8" cy="334.0" r="4.0" fill="#b2a7b4" opacity="0.88"/><circle cx="338.0" cy="339.0" r="4.2" fill="#b2a7b4" opacity="0.88"/><circle cx="325.4" cy="345.0" r="3.8" fill="#b2a7b4" opacity="0.88"/><circle cx="338.2" cy="348.6" r="4.2" fill="#b2a7b4" opacity="0.88"/><circle cx="333.4" cy="357.0" r="3.8" fill="#b2a7b4" opacity="0.88"/><circle cx="324.0" cy="358.0" r="3.0" fill="#b2a7b4" opacity="0.88"/><circle cx="328.6" cy="362.0" r="3.0" fill="#b2a7b4" opacity="0.88"/><circle cx="343.0" cy="329.0" r="3.8" fill="#b2a7b4" opacity="0.88"/><circle cx="361.0" cy="302.0" r="3.1" fill="#b2a7b4" opacity="0.88"/><circle cx="343.0" cy="306.0" r="3.8" fill="#b2a7b4" opacity="0.88"/><circle cx="310.0" cy="326.0" r="4.5" fill="#8fa3ab" opacity="0.93"/><circle cx="319.0" cy="329.4" r="4.2" fill="#6d7f88" opacity="0.93"/><circle cx="306.0" cy="332.6" r="4.0" fill="#a9b7be" opacity="0.93"/><circle cx="314.0" cy="333.0" r="3.8" fill="#8fa3ab" opacity="0.93"/><circle cx="322.0" cy="335.0" r="3.2" fill="#4f5f68" opacity="0.93"/><circle cx="307.8" cy="340.6" r="3.2" fill="#e2aebd" opacity="0.88"/><circle cx="312.0" cy="337.0" r="2.8" fill="#e2aebd" opacity="0.88"/><circle cx="305.0" cy="337.0" r="2.5" fill="#e2aebd" opacity="0.88"/><circle cx="334.2" cy="317.4" r="12.5" fill="#f8d6dd" opacity="0.90"/><circle cx="327.0" cy="310.5" r="7.0" fill="#fbe3e7" opacity="0.90"/><circle cx="342.0" cy="311.5" r="6.5" fill="#f5c3cf" opacity="0.90"/><circle cx="340.0" cy="325.0" r="6.5" fill="#f7ccd6" opacity="0.90"/><circle cx="325.5" cy="321.5" r="6.0" fill="#f9e6cf" opacity="0.95"/><circle cx="333.0" cy="309.0" r="5.0" fill="#f6c4d0" opacity="0.80"/><circle cx="335.500" cy="318" r="5.500" fill="url(#pk)" opacity=".95"/><circle cx="335.5" cy="318.0" r="2.9" fill="#3a1c2c" opacity="1.00"/><circle cx="331.0" cy="323.5" r="2.0" fill="#b89ab0" opacity="0.78"/><circle cx="474.7" cy="375.1" r="5.4" fill="#9cc2b2" opacity="0.98"/><circle cx="473.0" cy="386.8" r="5.4" fill="#7fae9a" opacity="0.90"/><circle cx="473.9" cy="396.0" r="6.0" fill="#86b3a1" opacity="0.90"/><circle cx="455.5" cy="396.0" r="6.8" fill="#8dbaa6" opacity="0.90"/><circle cx="442.9" cy="405.3" r="5.2" fill="#bdd3cb" opacity="0.90"/><circle cx="466.0" cy="380.0" r="3.8" fill="#b5cbc4" opacity="0.98"/><circle cx="454.6" cy="408.6" r="8.5" fill="#ecc0b0" opacity="0.95"/><circle cx="457.0" cy="407.0" r="5.6" fill="#cf9374" opacity="0.93"/><circle cx="450.0" cy="412.0" r="5.0" fill="#f2d2c6" opacity="0.98"/><circle cx="461.0" cy="413.0" r="5.0" fill="#f0c8c8" opacity="0.98"/><circle cx="469.7" cy="408.6" r="5.0" fill="#cdd2da" opacity="0.93"/><circle cx="466.0" cy="417.0" r="4.4" fill="#d8dce2" opacity="0.93"/><circle cx="474.0" cy="419.0" r="3.1" fill="#c5c9d1" opacity="0.93"/><circle cx="443.7" cy="427.0" r="12.0" fill="#f7d0d9" opacity="0.92"/><circle cx="437.0" cy="419.0" r="6.5" fill="#fbe2e7" opacity="0.90"/><circle cx="451.0" cy="421.0" r="6.0" fill="#f4bfcc" opacity="0.90"/><circle cx="430.3" cy="433.8" r="6.8" fill="#eaaca6" opacity="0.90"/><circle cx="436.0" cy="432.0" r="6.0" fill="#f8d8b8" opacity="1.00"/><circle cx="448.0" cy="434.0" r="5.5" fill="#f6c8d3" opacity="0.85"/><circle cx="444.500" cy="427.500" r="5.500" fill="url(#pk)" opacity=".95"/><circle cx="444.5" cy="427.5" r="3.0" fill="#40192e" opacity="1.00"/><circle cx="401.0" cy="433.0" r="4.2" fill="#9bb2aa" opacity="0.98"/><circle cx="411.0" cy="429.6" r="4.2" fill="#a5bab2" opacity="0.98"/><circle cx="422.0" cy="422.0" r="3.8" fill="#a9bdb6" opacity="0.98"/><circle cx="415.0" cy="422.0" r="3.2" fill="#b7c8c2" opacity="0.98"/><circle cx="411.9" cy="442.0" r="5.6" fill="#5e947c" opacity="0.98"/><circle cx="419.0" cy="440.5" r="5.6" fill="#6fa38b" opacity="0.98"/><circle cx="405.0" cy="441.0" r="4.4" fill="#7fae9a" opacity="0.98"/><circle cx="425.0" cy="437.0" r="4.4" fill="#86b3a1" opacity="0.98"/><circle cx="430.3" cy="447.2" r="5.0" fill="#b3bbc4" opacity="0.93"/><circle cx="438.0" cy="444.0" r="3.8" fill="#c3c9d1" opacity="0.93"/><circle cx="444.0" cy="441.0" r="3.8" fill="#bfc5cd" opacity="0.93"/><circle cx="447.0" cy="446.0" r="2.8" fill="#c9ced6" opacity="0.93"/><circle cx="452.0" cy="436.0" r="3.8" fill="#d5d9e0" opacity="0.93"/><circle cx="392.6" cy="447.2" r="4.4" fill="#f0cbd6" opacity="0.93"/><circle cx="396.0" cy="444.0" r="3.1" fill="#f0cbd6" opacity="0.93"/><circle cx="389.0" cy="445.0" r="2.8" fill="#f0cbd6" opacity="0.93"/></g><g filter="url(#fl2)"><path d="M371.5 340.8 q9.9 -2.500 19.8 0 q1 3 3.500 4 q-2 13.7 0 27.4 q-2.500 1 -3.500 4 q-9.9 2.500 -19.8 0 q-1 -3 -3.500 -4 q2 -13.7 0 -27.4 q2.500 -1 3.500 -4z" fill="#fff" stroke="#c3cfc8" stroke-width=".8"/><path d="M400.5 340.8 q9.9 -2.500 19.8 0 q1 3 3.500 4 q-2 13.7 0 27.4 q-2.500 1 -3.500 4 q-9.9 2.500 -19.8 0 q-1 -3 -3.500 -4 q2 -13.7 0 -27.4 q2.500 -1 3.500 -4z" fill="#fff" stroke="#c3cfc8" stroke-width=".8"/><ellipse cx="381.400" cy="356.500" rx="6.300" ry="6.300" fill="#f8dcbd"/><path d="M374.600 354.500c0-6 3-9.500 7-9.500s7 3.500 7 9.500c-4-2-10-2-14 0z" fill="#e48db0"/><path d="M385.500 346.500c2.500 1.500 3.500 5 3.200 8.500l-2.200-1c.3-2.500-.2-5-1-7.500z" fill="#5a2028"/><path d="M374.500 375.500c0-6 2.500-10.500 7-10.500s7 4.500 7 10.500z" fill="#e79ac0"/><circle cx="379" cy="357" r=".8" fill="#5a3a20"/><circle cx="384" cy="357" r=".8" fill="#5a3a20"/><path d="M402 375.500c-.5-9-1-17 1.500-24 2-5.500 10.500-5.500 12.500 0 2.500 7 2 15 1.500 24z" fill="#e58fb3"/><ellipse cx="409.600" cy="357.300" rx="5.400" ry="6" fill="#f8dcbd"/><path d="M404.500 349.500c2-3 8-3 10 0-3-.8-7-.8-10 0z" fill="#fbeff3"/><circle cx="407.500" cy="357.500" r=".8" fill="#5a3a20"/><circle cx="412" cy="357.500" r=".8" fill="#5a3a20"/><path d="M404 366c3 3 8 3 11 0l1 9.500h-13z" fill="#dd7fa8"/></g><g filter="url(#fl2)"><rect x="363" y="297.500" width="68.500" height="35.800" fill="none" stroke="#8f969f" stroke-width="1"/><path d="M397.300 286v11.500" stroke="#555" stroke-width=".9"/><circle cx="397.300" cy="284.300" r="2.600" fill="#8fd04a" stroke="#6aa52e" stroke-width=".6"/><circle cx="363.0" cy="297.5" r="2.400" fill="#fff" stroke="#7e858e" stroke-width=".8"/><circle cx="431.5" cy="297.5" r="2.400" fill="#fff" stroke="#7e858e" stroke-width=".8"/><circle cx="363.0" cy="333.3" r="2.400" fill="#fff" stroke="#7e858e" stroke-width=".8"/><circle cx="431.5" cy="333.3" r="2.400" fill="#fff" stroke="#7e858e" stroke-width=".8"/><rect x="395.4" y="295.6" width="3.800" height="3.800" fill="#fff" stroke="#7e858e" stroke-width=".8"/><rect x="395.4" y="331.4" width="3.800" height="3.800" fill="#fff" stroke="#7e858e" stroke-width=".8"/><rect x="361.1" y="313.5" width="3.800" height="3.800" fill="#fff" stroke="#7e858e" stroke-width=".8"/><rect x="429.6" y="313.5" width="3.800" height="3.800" fill="#fff" stroke="#7e858e" stroke-width=".8"/></g></svg>
<div style="position:absolute;left:388.6px;top:309.3px;width:22.1px;height:13.0px;background:#050505;"></div>
<div class="t" style="left:389.200px;top:311.800px;font-size:8.800px;color:#f4f4f4;letter-spacing:-.3px;filter:blur(.3px)">LISA</div>
<div class="t" style="left:353px;top:236.300px;font-size:9.600px;font-weight:bold;font-style:italic;color:#454545;letter-spacing:-.6px;text-decoration:underline;text-underline-offset:1.500px;-webkit-text-stroke:.5px #454545;filter:blur(.35px)" id="w1">WAALIMATULURUS</div>
<div class="t" style="left:315.200px;top:255.300px;font-size:9.600px;letter-spacing:-.53px;font-weight:bold;color:#4a4a4a;-webkit-text-stroke:.5px #4a4a4a;filter:blur(.35px)" id="w2">UNDANGAN MAJLIS PERKAHWINAN</div>
<div style="position:absolute;left:992.7px;top:150.5px;width:11.3px;height:429.9px;background:linear-gradient(90deg,#cfd3d8,#dcdfe4);"></div>
<div style="position:absolute;left:993.3px;top:250.0px;width:9.6px;height:202.0px;background:linear-gradient(90deg,#f4f5f7,#e4e7eb);border:1px solid #b9bec6;border-radius:2px"></div>
<div style="position:absolute;left:996.5px;top:349.0px;width:4.5px;height:1.0px;background:#8b9099;"></div>
<div style="position:absolute;left:996.5px;top:351.0px;width:4.5px;height:1.0px;background:#8b9099;"></div>
<div style="position:absolute;left:996.5px;top:353.0px;width:4.5px;height:1.0px;background:#8b9099;"></div>
<svg style="position:absolute;left:994px;top:150px" width="10" height="442" viewBox="0 0 10 442"><path d="M2 9l3-3.500 3 3.500zM2 403l3 3.500 3-3.500z" fill="#3c3f45"/><path d="M3 413l2-1.800 2 1.800zM3 415l2 1.800 2-1.800zM3 423.500l2-1.800 2 1.800zM3 425.500l2 1.800 2-1.800z" fill="#555"/></svg>
<div style="position:absolute;left:86.5px;top:580.4px;width:917.5px;height:11.1px;background:linear-gradient(#dadde2,#e4e7eb);"></div>
<div style="position:absolute;left:272.2px;top:582.0px;width:534.8px;height:8.3px;background:linear-gradient(#fbfcfd,#eceef2);border:1px solid #b4b9c2;border-radius:2px"></div>
<div style="position:absolute;left:537.0px;top:584.5px;width:1.0px;height:3.5px;background:#8b9099;"></div>
<div style="position:absolute;left:539.0px;top:584.5px;width:1.0px;height:3.5px;background:#8b9099;"></div>
<div style="position:absolute;left:541.0px;top:584.5px;width:1.0px;height:3.5px;background:#8b9099;"></div>
<svg style="position:absolute;left:86px;top:581px" width="908" height="11" viewBox="0 0 908 11"><path d="M7 2.500v6l-3.500-3zM900 2.500v6l3.500-3z" fill="#3c3f45"/></svg>
<div style="position:absolute;left:0.0px;top:591.5px;width:1004.0px;height:13.0px;background:linear-gradient(#eceef1,#dde0e5);border-top:1px solid #b9bdc4"></div>
<div class="t" style="left:2.5px;top:595.5px;font-size:7.00px;color:#5c6068;letter-spacing:-0.02px;-webkit-text-stroke:.2px #5c6068;">Page: 2 of 3</div>
<div class="t" style="left:50.5px;top:595.5px;font-size:7.00px;color:#5c6068;letter-spacing:-0.17px;-webkit-text-stroke:.2px #5c6068;">Caps Lock</div>
<div style="position:absolute;left:88.5px;top:593.5px;width:0.8px;height:10.0px;background:#c3c6cc;"></div>
<div style="position:absolute;left:234.8px;top:593.5px;width:0.8px;height:10.0px;background:#c3c6cc;"></div>
<div style="position:absolute;left:94.4px;top:595.5px;width:9.2px;height:6.8px;background:#f7f8fa;border:1px solid #8f949c"></div>
<div class="t" style="left:108.2px;top:595.5px;font-size:7.00px;color:#5c6068;letter-spacing:-0.13px;-webkit-text-stroke:.2px #5c6068;">1.77, 1.72 in.</div>
<div style="position:absolute;left:162.2px;top:595.3px;width:9.3px;height:6.5px;background:#eef0f3;border:1px solid #7f848c"></div>
<svg style="position:absolute;left:163.500px;top:596.300px" width="7" height="4.500" viewBox="0 0 7 4.500"><path d="M.5.500l2.500 3.500M3 .500l2 3.500M5.500.500h1" stroke="#555" stroke-width=".7"/></svg>
<div class="t" style="left:175.5px;top:595.5px;font-size:7.00px;color:#5c6068;letter-spacing:-0.05px;-webkit-text-stroke:.2px #5c6068;">0.87 x  0.39 in.</div>
<div style="position:absolute;left:852.8px;top:594.5px;width:8.2px;height:8.5px;background:#f1f3f5;border:1px solid #9a9fa7"></div>
<div style="position:absolute;left:854.5px;top:597.0px;width:5.0px;height:1.0px;background:#9a9fa7;"></div>
<div style="position:absolute;left:854.5px;top:599.5px;width:5.0px;height:1.0px;background:#9a9fa7;"></div>
<div style="position:absolute;left:862.6px;top:593.9px;width:12.1px;height:10.1px;background:linear-gradient(#fbe7a2,#f5cf66);border:1px solid #d9ab43;border-radius:1.500px"></div>
<div style="position:absolute;left:865.0px;top:596.3px;width:7.5px;height:5.5px;background:#fbf7ea;border:1px solid #85754a"></div>
<div style="position:absolute;left:868.3px;top:596.3px;width:0.9px;height:5.5px;background:#85754a;"></div>
<div class="t" style="left:880.3px;top:595.5px;font-size:7.00px;color:#5c6068;letter-spacing:-0.09px;-webkit-text-stroke:.2px #5c6068;">116%</div>
<svg style="position:absolute;left:902px;top:593px;filter:blur(.3px)" width="101" height="11" viewBox="0 0 101 11"><path d="M10 5.500h66" stroke="#8d9199" stroke-width="1"/><circle cx="5.800" cy="5.500" r="4.300" fill="#f4f5f7" stroke="#8d9199" stroke-width=".9"/><path d="M3.500 5.500h4.600" stroke="#444" stroke-width="1.100"/><circle cx="78.800" cy="5.500" r="4.300" fill="#f4f5f7" stroke="#8d9199" stroke-width=".9"/><path d="M76.500 5.500h4.600M78.800 3.200v4.600" stroke="#444" stroke-width="1.100"/><path d="M41 1.500h4v5l-2 2.500-2-2.500z" fill="#f6f7f9" stroke="#7d828a" stroke-width=".8"/><rect x="89.500" y="1" width="9" height="9" fill="#e9ebee" stroke="#7d828a" stroke-width=".9"/><path d="M91 2.500l2 2M97 2.500l-2 2M91 8.500l2-2M97 8.500l-2-2" stroke="#444" stroke-width=".9"/></svg><!--/VID-->
  </div>

  <!-- bottom controls -->
  <div style="position:absolute;left:0;top:605px;width:1004px;height:11px;background:#111214"></div>
  <!--CTRL--><svg style="position:absolute;left:13px;top:634px" width="15" height="16" viewBox="0 0 15 16"><path d="M1.200 1.200v13.600c0 .5.500.7.900.5L13 8.600c.4-.3.400-.9 0-1.200L2.100.700c-.4-.2-.9 0-.9.500z" fill="#ececec"/></svg>
<div class="t" id="tm1" style="left:40.500px;top:636px;font-size:13px;font-weight:bold;color:#fff;letter-spacing:-.55px">15:29</div>
<div class="t" id="tm2" style="left:73px;top:636px;font-size:13px;font-weight:bold;color:#f0f0f0">/</div>
<div class="t" id="tm3" style="left:80.800px;top:636px;font-size:13px;font-weight:bold;color:#f0f0f0;letter-spacing:-.95px">56:18</div>
<div style="position:absolute;left:119px;top:641px;width:708px;height:3px;background:#6b6b6b;border-radius:1.500px"></div>
<div style="position:absolute;left:119px;top:641px;width:201px;height:3px;background:#a8a8a8;border-radius:1.500px"></div>
<div style="position:absolute;left:119px;top:641px;width:196px;height:3px;background:#3a71ea;border-radius:1.500px"></div>
<svg style="position:absolute;left:844px;top:632px" width="20" height="20" viewBox="0 0 20 20"><path d="M8.300 0h3.400l.5 2.600c.6.200 1.200.5 1.700.8l2.300-1.400 2.400 2.400-1.500 2.200c.3.500.6 1.100.8 1.700l2.600.6v3.400l-2.600.5c-.2.600-.5 1.200-.8 1.700l1.500 2.300-2.400 2.400-2.300-1.500c-.5.300-1.100.6-1.700.8l-.5 2.600H8.300l-.5-2.600c-.6-.2-1.200-.5-1.700-.8l-2.300 1.500-2.400-2.400 1.500-2.300c-.3-.5-.6-1.100-.8-1.700L-.5 12.300V8.900l2.600-.6c.2-.6.500-1.200.8-1.700L1.400 4.400 3.800 2l2.300 1.400c.5-.3 1.100-.6 1.700-.8zM10 6.700a3.300 3.300 0 100 6.600 3.300 3.300 0 000-6.600z" fill="#ececec" fill-rule="evenodd"/></svg>
<svg style="position:absolute;left:888px;top:633px" width="19" height="18" viewBox="0 0 19 18"><rect x="1.200" y="1.200" width="16.600" height="15.600" rx="3" fill="none" stroke="#f2f2f2" stroke-width="2.200"/><rect x="8.500" y="8.500" width="8.500" height="7.500" rx=".8" fill="#f2f2f2"/></svg>
<svg style="position:absolute;left:932px;top:635px" width="14" height="14" viewBox="0 0 14 14"><path d="M8 0h6v6l-2.200-2.200-2.500 2.500-1.600-1.600 2.500-2.500zM6 14H0V8l2.200 2.200 2.500-2.500 1.600 1.600-2.500 2.500z" fill="#f2f2f2"/></svg>
<svg style="position:absolute;left:966px;top:632px" width="22" height="20" viewBox="0 0 22 20"><path d="M1 6.500h3.500L10.500.8c.4-.4 1-.1 1 .5v17.400c0 .6-.6.900-1 .5L4.500 13.500H1c-.4 0-.7-.3-.7-.7V7.200c0-.4.300-.7.700-.7z" fill="#f2f2f2"/><path d="M14.300 6.200c1.700 2 1.700 5.600 0 7.600M17 3.200c3.400 3.600 3.400 10 0 13.600" fill="none" stroke="#f2f2f2" stroke-width="1.700" stroke-linecap="round"/></svg>
<!--/CTRL-->
</div>

<div id="right">
<!--RIGHT--><!-- header -->
<div style="position:absolute;left:0;top:0;width:359px;height:1px;background:#dddddd"></div>
<div style="position:absolute;left:0;top:57px;width:359px;height:1px;background:#dadde1"></div>
<div class="circ" style="left:160px;top:9px"></div>
<div class="circ" style="left:208px;top:9px"></div>
<div class="circ" style="left:256px;top:9px"></div>
<div class="circ" style="left:304px;top:9px"></div>
<svg style="position:absolute;left:172px;top:21px" width="16" height="16" viewBox="0 0 16 16"><path d="M8 1V15M1 8H15" stroke="#050505" stroke-width="2" fill="none"/></svg>
<svg style="position:absolute;left:218px;top:19px" width="20" height="20" viewBox="0 0 20 20"><path d="M10 1C4.9 1 1 4.700 1 9.600c0 2.600 1.100 4.800 2.800 6.300.3.300.3.400.3.800l.1 1.600c0 .500.600.800 1 .600l1.800-.8c.200-.1.300-.1.500 0 .800.200 1.600.3 2.500.3 5.100 0 9-3.700 9-8.700C19 4.700 15.100 1 10 1z" fill="#050505"/><path d="M4.600 12.100l2.600-4.200c.400-.7 1.300-.8 1.900-.4l2.100 1.600c.2.100.5.100.600 0l2.800-2.100c.4-.3.900.2.600.6l-2.600 4.200c-.4.700-1.300.8-1.900.4l-2.100-1.600c-.2-.1-.5-.1-.6 0l-2.800 2.100c-.4.300-.9-.2-.6-.6z" fill="#e4e6eb"/></svg>
<svg style="position:absolute;left:266px;top:19px" width="20" height="20" viewBox="0 0 20 20"><path d="M10 1.500c-3.600 0-6 2.700-6 6.200v2.300c0 .5-.2 1-.5 1.400l-1.100 1.500c-.6.900 0 2.100 1.100 2.100h13c1.100 0 1.700-1.200 1.100-2.100l-1.100-1.500c-.3-.4-.5-.9-.5-1.400V7.700c0-3.500-2.400-6.200-6-6.200zM7.300 16.500c.3 1.200 1.400 2 2.700 2s2.400-.8 2.700-2z" fill="#050505"/></svg>
<svg style="position:absolute;left:317px;top:24px" width="14" height="9" viewBox="0 0 14 9"><path d="M1 1.200h12c.5 0 .7.500.4.900L7.600 8.300c-.3.400-.9.400-1.200 0L.6 2.100C.3 1.700.5 1.200 1 1.200z" fill="#050505"/></svg>
<div style="position:absolute;left:282.500px;top:3.500px;width:32.500px;height:19.500px;border-radius:10px;background:#f02849"></div>
<div class="t" id="badge" style="left:282.500px;top:6.500px;width:32.500px;text-align:center;color:#fff;font-size:13px;font-weight:bold">20+</div>

<!-- author -->
<svg style="position:absolute;left:16px;top:73px" width="40" height="40" viewBox="0 0 40 40"><circle cx="20" cy="20" r="17.600" fill="#fff" stroke="#e9151b" stroke-width="4.200"/><path d="M8.500 8.500L31.500 31.500" stroke="#f3777a" stroke-width="3.600"/><text x="20" y="24" text-anchor="middle" font-family="Liberation Sans, sans-serif" font-weight="bold" font-size="9" fill="#0a0a0a" stroke="#0a0a0a" stroke-width=".7" textLength="27" lengthAdjust="spacingAndGlyphs">COVID-19</text></svg>
<div class="t" id="n1" style="left:63.7px;top:76px;font-size:15px;font-weight:bold;letter-spacing:-0.14px">Pusat Internet Muzium Telegraf</div>
<div class="t" id="n2" style="left:63.7px;top:95px;font-size:15px;font-weight:bold;letter-spacing:-0.13px">Taiping</div>
<div class="t g" id="n3" style="left:118.2px;top:95px;font-size:15px;letter-spacing:-0.22px">was live.</div>
<div class="t g" id="n4" style="left:63.7px;top:116px;font-size:13px;letter-spacing:-0.13px">Published by StreamYard</div>
<svg style="position:absolute;left:210px;top:116px" width="13" height="13" viewBox="0 0 13 13"><circle cx="6.500" cy="6.500" r="6.200" fill="#65676b"/><text x="6.500" y="10" text-anchor="middle" font-family="Liberation Sans, sans-serif" font-weight="bold" font-size="9.500" fill="#fff">?</text></svg>
<div class="t g" style="left:227px;top:116px;font-size:13px">·</div>
<div class="t g" id="n5" style="left:63.7px;top:131px;font-size:13px;letter-spacing:-0.14px">June 20 at 10:14 AM</div>
<div class="t g" style="left:183px;top:131px;font-size:13px">·</div>
<svg style="position:absolute;left:190px;top:132px" width="12" height="12" viewBox="0 0 12 12"><circle cx="6" cy="6" r="6" fill="#65676b"/><path d="M2.200 2.500c1 .2 1.600 1 2.600 1 .9 0 1.300-.9 2.200-.8.700.1.600 1.100 0 1.500-.8.500-1.900.4-2.300 1.300-.3.800.6 1.200 1.300 1.500.8.400.8 1.400.5 2.200-.2.700-.8 1.300-1.400 1.700C2.600 10.200.9 8.300.9 6c0-1.300.5-2.600 1.300-3.500zM9 3.500c.9.900 1.700 2 1.400 3.300-.3-.5-1-.6-1.400-1-.5-.6-.4-1.600 0-2.300z" fill="#fff"/></svg>
<div class="circ" style="left:308px;top:73px;width:36px;height:36px"></div>
<svg style="position:absolute;left:316px;top:87px" width="20" height="8" viewBox="0 0 20 8"><circle cx="4" cy="4" r="1.900" fill="#050505"/><circle cx="10" cy="4" r="1.900" fill="#050505"/><circle cx="16" cy="4" r="1.900" fill="#050505"/></svg>

<!-- title -->
<div class="t" id="t1" style="-webkit-text-stroke:.35px #050505;left:16.2px;top:151.5px;font-size:20px;letter-spacing:0.03px">Publisher : Kad Jemputan</div>
<div class="t" id="t2" style="-webkit-text-stroke:.35px #050505;left:16.2px;top:176px;font-size:20px;letter-spacing:0.03px">Perkahwinan</div>
<div class="t" id="d1" style="left:16.2px;top:200px;font-size:15px;color:#1c1e21;letter-spacing:-0.12px">Cara asas membuat kad jemputan perkahwinan</div>
<div class="t" id="d2" style="left:16.2px;top:219px;font-size:15px;color:#1c1e21;letter-spacing:0.00px">menggunakan publisher</div>

<!-- reactions -->
<svg style="position:absolute;left:34.600px;top:246.700px" width="20" height="20" viewBox="0 0 20 20"><defs><linearGradient id="hr" x1="0" y1="0" x2="0" y2="1"><stop offset="0" stop-color="#ff6680"/><stop offset="1" stop-color="#e61739"/></linearGradient></defs><circle cx="10" cy="10" r="8.800" fill="url(#hr)"/><path d="M10 15.400c-.2 0-.4-.1-.5-.2-2.700-2-4.600-3.600-4.600-5.900 0-1.600 1.200-2.900 2.700-2.900 1 0 1.800.5 2.400 1.400.6-.9 1.400-1.400 2.400-1.400 1.500 0 2.700 1.300 2.700 2.900 0 2.300-1.900 3.900-4.600 5.900-.1.100-.3.200-.5.200z" fill="#fff"/></svg>
<svg style="position:absolute;left:16.100px;top:245.700px" width="22" height="22" viewBox="0 0 22 22"><defs><linearGradient id="lk" x1="0" y1="0" x2="0" y2="1"><stop offset="0" stop-color="#2590f2"/><stop offset="1" stop-color="#0c62d6"/></linearGradient></defs><circle cx="11" cy="11" r="10" fill="url(#lk)" stroke="#fff" stroke-width="2"/><path d="M6 10.200h2v5.600H6zM8.800 10.300c1-.8 1.700-1.900 1.900-3.200.1-.7.400-1.100 1-1.100.9 0 1.300.9 1.300 1.800 0 .6-.1 1.100-.4 1.700h2.200c.8 0 1.300.5 1.300 1.100 0 .4-.2.800-.6 1 .2.200.4.500.4.800 0 .5-.3.900-.7 1.100.1.200.1.400.1.500 0 .5-.3.900-.8 1 .1.200.1.300.1.500 0 .6-.5 1-1.200 1h-2.600c-.8 0-1.500-.2-2-.7z" fill="#fff"/></svg>
<div class="t g" id="r1" style="left:61.6px;top:248.400px;font-size:15px;letter-spacing:-0.35px">20</div>
<div class="t g" id="r2" style="left:178.8px;top:248.400px;font-size:15px;letter-spacing:-0.16px">54 Comments</div>
<div class="t g" id="r3" style="left:278.4px;top:248.400px;font-size:15px;letter-spacing:-0.36px">169 Views</div>
<div style="position:absolute;left:16px;top:278px;width:328px;height:1px;background:#ced0d4"></div>

<!-- stats -->
<div class="t" id="s1" style="left:15.7px;top:292px;font-size:15px;color:#1c1e21;letter-spacing:-0.10px">310</div>
<div class="t" id="s2" style="left:15.7px;top:311px;font-size:13px;color:#1c1e21;letter-spacing:-0.28px">People Reached</div>
<div class="t" id="s3" style="left:196.2px;top:292px;font-size:15px;color:#1c1e21;letter-spacing:-0.60px">181</div>
<div class="t" id="s4" style="left:195.4px;top:311px;font-size:13px;color:#1c1e21;letter-spacing:-0.20px">Reactions, Comments,</div>
<div class="t" id="s5" style="left:195.4px;top:326.5px;font-size:13px;color:#1c1e21;letter-spacing:-0.29px">and Shares</div>
<div class="t" id="s6" style="left:15.7px;top:355px;font-size:15px;color:#1c1e21;letter-spacing:-0.10px">169</div>
<div class="t" id="s7" style="left:15.7px;top:376px;font-size:13px;color:#1c1e21;letter-spacing:-0.11px">3-Second Video Views</div>
<div class="t" id="s8" style="left:195.4px;top:376px;font-size:13px;color:#1c1e21;letter-spacing:-0.09px">Retention Curve</div>
<svg style="position:absolute;left:196px;top:350px" width="130" height="24" viewBox="0 0 130 24"><path d="M2 2L5 17L8 18.500L14 19L20 19.600L26 19L32 20L38 19.500L44 20.200L50 19.800L56 20.500L62 20.600L68 20L74 20.800L80 20.400L86 21L92 20.600L98 21L104 20.700L110 21.200L116 20.800L122 21.300L126 21L126 22.500L2 22.500Z" fill="#e7f0fd"/><path d="M2 2L5 17L8 18.500L14 19L20 19.600L26 19L32 20L38 19.500L44 20.200L50 19.800L56 20.500L62 20.600L68 20L74 20.800L80 20.400L86 21L92 20.600L98 21L104 20.700L110 21.200L116 20.800L122 21.300L126 21" fill="none" stroke="#3f86e8" stroke-width="1.200"/></svg>

<!-- button -->
<div style="position:absolute;left:16px;top:415px;width:328px;height:36px;border-radius:6px;background:#e4e6eb"></div>
<div class="t" id="b1" style="left:16px;top:425px;width:328px;text-align:center;font-size:15px;font-weight:bold;letter-spacing:-0.12px">View More Video Details</div>

<!-- actions -->
<svg style="position:absolute;left:32.200px;top:462.800px" width="19" height="19" viewBox="0 0 20 20"><circle cx="10" cy="10" r="9.300" fill="url(#hr)"/><path d="M10 15.800c-.2 0-.4-.1-.6-.2-2.900-2.200-5-3.900-5-6.400 0-1.800 1.300-3.200 3-3.200 1 0 1.900.6 2.600 1.500.7-.9 1.600-1.500 2.600-1.500 1.700 0 3 1.400 3 3.200 0 2.500-2.100 4.200-5 6.400-.2.100-.4.200-.6.200z" fill="#fff"/></svg>
<div class="t" id="a1" style="left:56.6px;top:466px;font-size:15px;font-weight:bold;color:#f33e58;letter-spacing:-0.55px">Love</div>
<svg style="position:absolute;left:111px;top:464px" width="19" height="19" viewBox="0 0 19 19"><path d="M4.500 2h10c1.700 0 3 1.300 3 3v6c0 1.700-1.300 3-3 3H8.500l-3.300 3c-.5.400-1.200.1-1.200-.5V14c-1.400-.3-2.500-1.500-2.500-3V5c0-1.700 1.300-3 3-3z" fill="none" stroke="#65676b" stroke-width="1.500"/></svg>
<div class="t g" id="a2" style="left:135.6px;top:466px;font-size:15px;font-weight:bold;letter-spacing:-0.16px">Comment</div>
<svg style="position:absolute;left:216px;top:463px" width="19" height="19" viewBox="0 0 19 19"><path d="M11 3l6.500 6L11 15v-3.500c-4 0-7 1-9.500 4.500 1-5 4-8.500 9.500-9z" fill="none" stroke="#65676b" stroke-width="1.500" stroke-linejoin="round"/></svg>
<div class="t g" id="a3" style="left:242.8px;top:466px;font-size:15px;font-weight:bold;letter-spacing:-0.46px">Share</div>
<svg style="position:absolute;left:302px;top:463px" width="20" height="20" viewBox="0 0 40 40"><circle cx="20" cy="20" r="17.600" fill="#fff" stroke="#e9151b" stroke-width="4.200"/><path d="M8.500 8.500L31.500 31.500" stroke="#f3777a" stroke-width="3.600"/><text x="20" y="24" text-anchor="middle" font-family="Liberation Sans, sans-serif" font-weight="bold" font-size="9" fill="#0a0a0a" stroke="#0a0a0a" stroke-width=".7" textLength="27" lengthAdjust="spacingAndGlyphs">COVID-19</text></svg>
<svg style="position:absolute;left:326px;top:470.500px" width="8.500" height="5.200" viewBox="0 0 10 6"><path d="M0 0h10L5 6z" fill="#65676b"/></svg>
<div style="position:absolute;left:0;top:495px;width:359px;height:1px;background:#ced0d4"></div>

<!-- comments -->
<div style="position:absolute;left:23px;top:504px;width:98px;height:36px;border-radius:18px;background:#e7f3ff"></div>
<div class="t" id="c1" style="left:23px;top:515px;width:98px;text-align:center;font-size:15px;font-weight:bold;color:#1876f2;letter-spacing:-0.38px">Comments</div>
<div class="t" id="c2" style="left:312.6px;top:515px;font-size:15px;color:#216fdb;letter-spacing:0.15px">Hide</div>
<div style="position:absolute;left:16px;top:548px;width:328px;height:1px;background:#ced0d4"></div>
<div class="t g" id="c3" style="left:226.2px;top:555px;font-size:15px;font-weight:bold;letter-spacing:-0.27px">Most Relevant</div>
<svg style="position:absolute;left:331px;top:560px" width="10" height="6" viewBox="0 0 10 6"><path d="M0 0h10L5 6z" fill="#65676b"/></svg>

<div style="position:absolute;left:0;top:576px;width:359px;height:19px;overflow:hidden">
  <svg style="position:absolute;left:16px;top:8px" width="32" height="32" viewBox="0 0 40 40"><circle cx="20" cy="20" r="17.600" fill="#fff" stroke="#e9151b" stroke-width="4.200"/><path d="M8.500 8.500L31.500 31.500" stroke="#f3777a" stroke-width="3.600"/><text x="20" y="24" text-anchor="middle" font-family="Liberation Sans, sans-serif" font-weight="bold" font-size="9" fill="#0a0a0a" stroke="#0a0a0a" stroke-width=".7" textLength="27" lengthAdjust="spacingAndGlyphs">COVID-19</text></svg>
  <div style="position:absolute;left:54px;top:5px;width:247px;height:50px;border-radius:18px;background:#f0f2f5"></div>
  <div class="t" id="c4" style="left:66.2px;top:14px;font-size:13px;font-weight:bold;letter-spacing:-0.12px">Pusat Internet Muzium Telegraf</div>
  <div style="position:absolute;left:345px;top:2px;width:14px;height:17px;background:#f1f1f1"></div>
  <svg style="position:absolute;left:348px;top:4px" width="8" height="13" viewBox="0 0 8 13"><path d="M0 5L4 0L8 5zM0 8L4 13L8 8z" fill="#505050"/></svg>
</div>

<!-- composer -->
<svg style="position:absolute;left:16px;top:614px" width="32" height="32" viewBox="0 0 40 40"><circle cx="20" cy="20" r="17.600" fill="#fff" stroke="#e9151b" stroke-width="4.200"/><path d="M8.500 8.500L31.500 31.500" stroke="#f3777a" stroke-width="3.600"/><text x="20" y="24" text-anchor="middle" font-family="Liberation Sans, sans-serif" font-weight="bold" font-size="9" fill="#0a0a0a" stroke="#0a0a0a" stroke-width=".7" textLength="27" lengthAdjust="spacingAndGlyphs">COVID-19</text></svg>
<div style="position:absolute;left:54px;top:612px;width:290px;height:36px;border-radius:18px;background:#f0f2f5"></div>
<div class="t g" id="p1" style="left:66px;top:623px;font-size:15px;width:198px;overflow:hidden">Comment as Pusat Internet Muzium</div>
<svg style="position:absolute;left:262px;top:622px" width="17" height="17" viewBox="0 0 17 17"><circle cx="8.500" cy="8.500" r="7.500" fill="none" stroke="#65676b" stroke-width="1.200"/><circle cx="6" cy="6.800" r="1" fill="#65676b"/><circle cx="11" cy="6.800" r="1" fill="#65676b"/><path d="M5 10.500c1 1.600 2.200 2.200 3.500 2.200s2.500-.6 3.500-2.200" fill="none" stroke="#65676b" stroke-width="1.200" stroke-linecap="round"/></svg>
<svg style="position:absolute;left:289px;top:622px" width="18" height="17" viewBox="0 0 18 17"><path d="M3.500 4h2l1-1.800h5L12.500 4h2c1.100 0 2 .9 2 2v7c0 1.100-.9 2-2 2h-11c-1.100 0-2-.9-2-2V6c0-1.100.9-2 2-2z" fill="none" stroke="#65676b" stroke-width="1.200"/><circle cx="9" cy="9.300" r="3" fill="none" stroke="#65676b" stroke-width="1.200"/><circle cx="14" cy="6.500" r=".8" fill="#65676b"/></svg>
<svg style="position:absolute;left:318px;top:622px" width="17" height="17" viewBox="0 0 17 17"><path d="M2 5.500c-.3-1.300.5-2.600 1.800-2.900l7.700-1.600c1.300-.3 2.600.5 2.900 1.800l1.100 5.200c.1.600 0 1.200-.4 1.700l-4.300 5.300c-.4.500-.9.800-1.500.9l-2.400.5c-1.300.3-2.600-.5-2.900-1.800z" fill="none" stroke="#65676b" stroke-width="1.200"/><circle cx="6.300" cy="6.800" r="1" fill="#65676b"/><circle cx="11" cy="5.800" r="1" fill="#65676b"/><path d="M6.500 10.500c1.500 1 3.500.6 4.800-.9" fill="none" stroke="#65676b" stroke-width="1.200" stroke-linecap="round"/></svg>


<!--/RIGHT-->
</div>
</body>
</html>
